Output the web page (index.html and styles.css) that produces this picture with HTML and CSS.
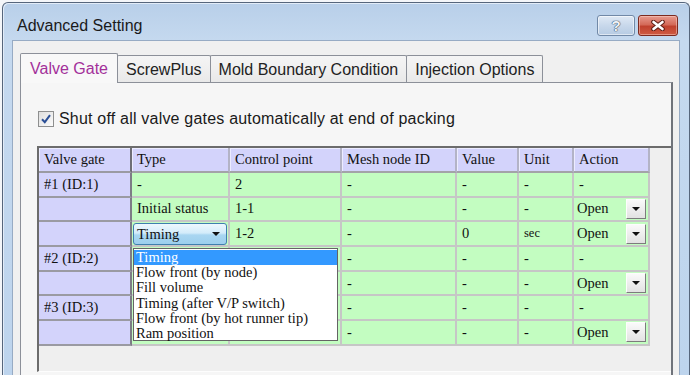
FILE: index.html
```html
<!DOCTYPE html>
<html lang="en">
<head>
    <meta charset="UTF-8">
    <title>Advanced Setting</title>
    <link rel="stylesheet" href="styles.css">
</head>
<body>
    <div class="window">
        <div class="titlebar">
            <span class="title">Advanced Setting</span>
            <div class="caption-buttons">
                <div class="cap-btn help">?</div>
                <div class="cap-btn close">
                    <svg width="14" height="11" viewBox="0 0 14 11">
                        <path d="M2.5 2 L11.5 9 M11.5 2 L2.5 9" stroke="#5d1d14" stroke-width="4.6" stroke-linecap="round"/>
                        <path d="M2.5 2 L11.5 9 M11.5 2 L2.5 9" stroke="#fff" stroke-width="2.6" stroke-linecap="round"/>
                    </svg>
                </div>
            </div>
        </div>

        <div class="frame">
            <div class="client">
                <div class="tabs">
                    <div class="tab active">Valve Gate</div>
                    <div class="tab">ScrewPlus</div>
                    <div class="tab">Mold Boundary Condition</div>
                    <div class="tab">Injection Options</div>
                </div>

                <div class="tab-panel">
                    <label class="check-row">
                        <span class="checkbox">
                            <svg width="14" height="14" viewBox="0 0 14 14">
                                <path d="M3 7.2 L5.8 10.2 L11 3.2" fill="none" stroke="#2b4f96" stroke-width="2"/>
                            </svg>
                        </span>
                        Shut off all valve gates automatically at end of packing
                    </label>

                    <div class="grid">
                        <table>
                            <colgroup>
                                <col class="c-gate">
                                <col class="c-type">
                                <col class="c-point">
                                <col class="c-node">
                                <col class="c-value">
                                <col class="c-unit">
                                <col class="c-action">
                            </colgroup>
                            <tr class="head">
                                <th class="gate">Valve gate</th>
                                <th>Type</th>
                                <th>Control point</th>
                                <th>Mesh node ID</th>
                                <th>Value</th>
                                <th>Unit</th>
                                <th>Action</th>
                            </tr>
                            <tr>
                                <td class="gate">#1 (ID:1)</td>
                                <td>-</td>
                                <td>2</td>
                                <td>-</td>
                                <td>-</td>
                                <td>-</td>
                                <td>-</td>
                            </tr>
                            <tr>
                                <td class="gate"></td>
                                <td>Initial status</td>
                                <td>1-1</td>
                                <td>-</td>
                                <td>-</td>
                                <td>-</td>
                                <td class="action"><div class="combo"><span>Open</span><span class="drop-btn"></span></div></td>
                            </tr>
                            <tr>
                                <td class="gate"></td>
                                <td class="editing"><div class="type-combo"><span>Timing</span><span class="arrow"></span></div></td>
                                <td>1-2</td>
                                <td>-</td>
                                <td>0</td>
                                <td class="small">sec</td>
                                <td class="action"><div class="combo"><span>Open</span><span class="drop-btn"></span></div></td>
                            </tr>
                            <tr>
                                <td class="gate">#2 (ID:2)</td>
                                <td></td>
                                <td></td>
                                <td>-</td>
                                <td>-</td>
                                <td>-</td>
                                <td>-</td>
                            </tr>
                            <tr>
                                <td class="gate"></td>
                                <td></td>
                                <td></td>
                                <td>-</td>
                                <td>-</td>
                                <td>-</td>
                                <td class="action"><div class="combo"><span>Open</span><span class="drop-btn"></span></div></td>
                            </tr>
                            <tr>
                                <td class="gate">#3 (ID:3)</td>
                                <td></td>
                                <td></td>
                                <td>-</td>
                                <td>-</td>
                                <td>-</td>
                                <td>-</td>
                            </tr>
                            <tr>
                                <td class="gate"></td>
                                <td></td>
                                <td></td>
                                <td>-</td>
                                <td>-</td>
                                <td>-</td>
                                <td class="action"><div class="combo"><span>Open</span><span class="drop-btn"></span></div></td>
                            </tr>
                        </table>

                        <ul class="drop-list">
                            <li class="selected">Timing</li>
                            <li>Flow front (by node)</li>
                            <li>Fill volume</li>
                            <li>Timing (after V/P switch)</li>
                            <li>Flow front (by hot runner tip)</li>
                            <li>Ram position</li>
                        </ul>
                    </div>
                </div>
            </div>
        </div>
    </div>
</body>
</html>
```

FILE: styles.css
```css
* {
    box-sizing: border-box;
}

body {
    margin: 0;
    background: #f4f6f9;
    overflow: hidden;
    font-family: "Liberation Sans", Arial, sans-serif;
    color: #1c1c1c;
}

.window {
    width: 688px;
    height: 373px;
    margin: 2px 0 0 2px;
    border: 1px solid #56667c;
    border-bottom: none;
    border-radius: 6px 6px 0 0;
    background: linear-gradient(#b8cfe9, #c5d9ef 38px, #bdd4ed);
    box-shadow: inset 1px 1px 0 #e2ecf8;
    display: flex;
    flex-direction: column;
}

/* title bar */
.titlebar {
    height: 37px;
    flex: none;
    display: flex;
    align-items: flex-start;
    padding: 0 11px 0 14px;
}

.title {
    padding-top: 13px;
    font-size: 16px;
    line-height: 19px;
    color: #1a1a1a;
}

.caption-buttons {
    margin-left: auto;
    margin-top: 12px;
    display: flex;
    gap: 3px;
}

.cap-btn {
    height: 21px;
    border-radius: 3px;
    display: flex;
    align-items: center;
    justify-content: center;
}

.cap-btn.help {
    width: 38px;
    border: 1px solid #7189a7;
    background: linear-gradient(#dfe9f5, #c8d8eb 50%, #b6cbe3);
    box-shadow: inset 0 0 0 1px rgba(255,255,255,0.55);
    font-weight: bold;
    font-size: 15px;
    color: #eef2f7;
    text-shadow: 0 0 1px #3b4d63, 0 0 1px #3b4d63, 0 0 1px #3b4d63;
}

.cap-btn.close {
    width: 40px;
    border: 1px solid #7c2a20;
    background: linear-gradient(#e79a8e, #d46a59 45%, #c0412e 55%, #cf5b43);
    box-shadow: inset 0 0 0 1px rgba(255,220,210,0.45);
}

/* client area */
.frame {
    flex: 1;
    padding: 0 9px;
    display: flex;
}

.client {
    flex: 1;
    border: 1px solid #97abc4;
    border-bottom: none;
    background: #f0f0f0;
    padding: 12px 6px 0 7px;
    display: flex;
    flex-direction: column;
}

.tabs {
    height: 29px;
    flex: none;
    display: flex;
    align-items: flex-end;
}

.tab {
    height: 27px;
    padding: 1px 8px 0;
    margin-left: -1px;
    display: flex;
    align-items: center;
    font-size: 16px;
    border: 1px solid #8c9099;
    border-bottom: none;
    border-radius: 2px 2px 0 0;
    background: linear-gradient(#f5f5f5, #e9e9e9);
    color: #222;
}

.tab.active {
    height: 30px;
    margin-left: 0;
    margin-bottom: -1px;
    padding: 1px 9px 0;
    position: relative;
    z-index: 1;
    background: #f8f8f8;
    color: #a3309a;
}

.tab-panel {
    flex: 1;
    border: 1px solid #8c9099;
    border-right: 2px solid #6f737a;
    border-bottom: none;
    background: #f6f6f6;
    padding: 27px 0 0 17px;
}

.check-row {
    height: 18px;
    display: flex;
    align-items: center;
    gap: 5px;
    font-size: 16px;
    letter-spacing: 0.2px;
    color: #1a1a1a;
}

.checkbox {
    width: 16px;
    height: 16px;
    border: 1px solid #8e8f8f;
    background: linear-gradient(135deg, #dedede, #fbfbfb);
    display: flex;
    align-items: center;
    justify-content: center;
}

/* grid */
.grid {
    position: relative;
    margin: 18px 0 0 -1px;
    height: 226px;
    border-top: 2px solid #6c6c6c;
    border-left: 2px solid #6c6c6c;
    border-bottom: 1px solid #fdfdfd;
    background: #efefef;
}

table {
    width: 611px;
    table-layout: fixed;
    border-spacing: 0;
    font-family: "Liberation Serif", "Times New Roman", serif;
    font-size: 14.5px;
    color: #111;
}

.c-gate { width: 93px; }
.c-type { width: 98px; }
.c-point { width: 112px; }
.c-node { width: 115px; }
.c-value { width: 62px; }
.c-unit { width: 55px; }
.c-action { width: 76px; }

tr {
    height: 24.6px;
}

tr.head {
    height: 25px;
}

th, td {
    padding: 0 0 0 5px;
    text-align: left;
    font-weight: normal;
    white-space: nowrap;
    overflow: hidden;
    background: #c3fdc1;
    border-right: 2px solid #c6c6c6;
    border-bottom: 2px solid #c6c6c6;
    vertical-align: middle;
}

th {
    background: #d3d3fb;
    border-right-color: #b3b3c6;
    border-bottom-color: #a3a3a8;
    box-shadow: inset 1px 1px 0 #ececff;
}

.gate {
    background: #d3d3fb;
    border-right-color: #7d7d86;
    border-bottom-color: #9a9aa2;
}

th.gate {
    border-right-color: #6e6e76;
}

td.small {
    font-size: 12.5px;
}

td.action {
    padding: 0 2px 0 3px;
}

.combo {
    display: flex;
    align-items: center;
    justify-content: space-between;
}

.drop-btn {
    width: 20px;
    height: 20px;
    border: 1px solid;
    border-color: #fdfdfd #7c7c7c #7c7c7c #fdfdfd;
    background: linear-gradient(#fafafa, #e2e2e2);
    position: relative;
}

.drop-btn::after {
    content: '';
    position: absolute;
    left: 5px;
    top: 7px;
    border-left: 4px solid transparent;
    border-right: 4px solid transparent;
    border-top: 4px solid #111;
}

td.editing {
    padding: 1px 1px 0 1px;
}

.type-combo {
    height: 22px;
    border: 1px solid #3f7fae;
    border-radius: 3px;
    background: linear-gradient(#eef8fe, #d3ecfa 45%, #a9d6f1 55%, #9ccfee);
    padding: 0 0 0 3px;
    display: flex;
    align-items: center;
    justify-content: space-between;
}

.type-combo .arrow {
    margin-right: 6px;
    border-left: 4px solid transparent;
    border-right: 4px solid transparent;
    border-top: 4px solid #111;
}

.drop-list {
    position: absolute;
    left: 94px;
    top: 100px;
    width: 205px;
    height: 93px;
    margin: 0;
    padding: 1px 0 0 0;
    list-style: none;
    background: #fff;
    border: 1px solid #646464;
    font-family: "Liberation Serif", "Times New Roman", serif;
    font-size: 14.5px;
    line-height: 15.2px;
    color: #111;
    z-index: 5;
}

.drop-list li {
    padding-left: 2px;
    white-space: nowrap;
}

.drop-list li.selected {
    background: #3399ff;
    color: #fff;
}
```
